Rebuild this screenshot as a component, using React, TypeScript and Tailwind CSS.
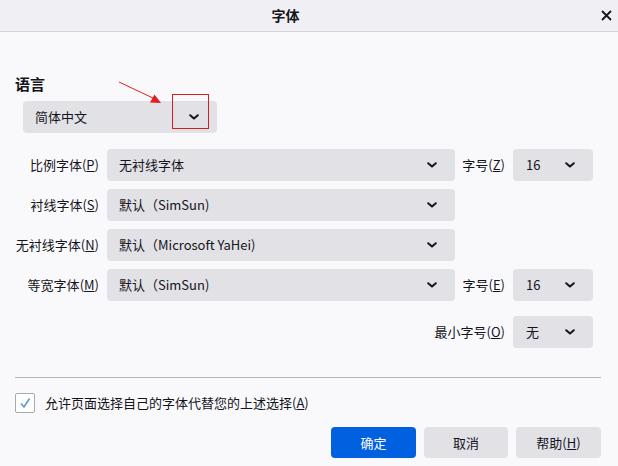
import React from 'react';

const font = { fontFamily: '"Noto Sans CJK SC", "Noto Sans", sans-serif' };

function Chevron() {
    return (
        <svg width="10" height="6" viewBox="0 0 10 6" className="shrink-0">
            <path d="M1.2 1.2 L5 4.6 L8.8 1.2" fill="none" stroke="#15141a" strokeWidth="2" strokeLinecap="round" strokeLinejoin="round" />
        </svg>
    );
}

function Select({ value, className }: { value: string; className: string }) {
    return (
        <div className={`h-8 rounded-[4px] bg-[#e1e1e6] flex items-center justify-between pl-3 pr-[18px] ${className}`}>
            <span className="text-[13px] text-[#15141a] whitespace-nowrap">{value}</span>
            <Chevron />
        </div>
    );
}

function Label({ text, k, className }: { text: string; k: string; className: string }) {
    return (
        <span className={`text-[13px] text-[#15141a] text-right whitespace-nowrap ${className}`}>
            {text}(<span className="underline">{k}</span>)
        </span>
    );
}

export default function App() {
    const rows = [
        { label: '比例字体', k: 'P', value: '无衬线字体', size: { label: '字号', k: 'Z', value: '16' } },
        { label: '衬线字体', k: 'S', value: '默认（SimSun)' },
        { label: '无衬线字体', k: 'N', value: '默认（Microsoft YaHei)' },
        { label: '等宽字体', k: 'M', value: '默认（SimSun)', size: { label: '字号', k: 'E', value: '16' } },
    ];

    return (
        <div className="relative w-[618px] h-[466px] bg-[#f9f9fb] flex flex-col overflow-hidden" style={font}>
            {/* title bar */}
            <div className="h-8 shrink-0 bg-[#f0f0f4] border-b border-[#d4d4d8] flex items-center">
                <span className="flex-1 text-center pr-[30px] text-[14px] font-bold text-[#15141a]">字体</span>
                <svg width="11" height="11" viewBox="0 0 11 11" className="mr-[6px]">
                    <path d="M1 1 L10 10 M10 1 L1 10" stroke="#15141a" strokeWidth="1.8" />
                </svg>
            </div>

            {/* language */}
            <div className="pl-[15px] mt-[41px] text-[15px] font-bold text-[#15141a] leading-[22px]">语言</div>
            <Select value="简体中文" className="ml-[23px] mt-[6px] w-[194px] pr-[16px]" />

            {/* fonts */}
            <div className="mt-4 flex flex-col gap-2">
                {rows.map((r) => (
                    <div key={r.label} className="flex items-center">
                        <Label text={r.label} k={r.k} className="w-[99px]" />
                        <Select value={r.value} className="ml-2 w-[348px]" />
                        {r.size && (
                            <>
                                <Label text={r.size.label} k={r.size.k} className="w-[50px]" />
                                <Select value={r.size.value} className="ml-2 w-20 pl-[13px]" />
                            </>
                        )}
                    </div>
                ))}
            </div>
            <div className="mt-[15px] flex items-center">
                <Label text="最小字号" k="O" className="w-[505px]" />
                <Select value="无" className="ml-2 w-20 pl-[13px]" />
            </div>

            {/* separator */}
            <div className="mx-[15px] mt-[29px] mr-[17px] border-t border-[#b6b6ba]" />

            {/* checkbox */}
            <div className="mt-[15px] ml-[15px] flex items-center gap-[10px]">
                <div className="w-5 h-5 bg-white border border-[#a9a9ae] rounded-[2px] flex items-center justify-center">
                    <svg width="12" height="12" viewBox="0 0 12 12">
                        <path d="M2 6.5 L5 10 L10.5 1.5" fill="none" stroke="#5b9ac9" strokeWidth="1.6" />
                    </svg>
                </div>
                <span className="text-[13px] text-[#15141a]">
                    允许页面选择自己的字体代替您的上述选择(<span className="underline">A</span>)
                </span>
            </div>

            {/* buttons */}
            <div className="mt-[14px] mr-[17px] flex justify-end gap-2">
                <button className="w-[85px] h-[31px] rounded-[4px] bg-[#0061e0] text-white text-[13px]">确定</button>
                <button className="w-[84px] h-[31px] rounded-[4px] bg-[#e1e1e6] text-[#15141a] text-[13px]">取消</button>
                <button className="w-[85px] h-[31px] rounded-[4px] bg-[#e1e1e6] text-[#15141a] text-[13px]">
                    帮助(<span className="underline">H</span>)
                </button>
            </div>

            {/* red annotation */}
            <div className="absolute left-[172px] top-[94px] w-[37px] h-[35px] border border-[#d02020]" />
            <svg className="absolute left-[115px] top-[78px]" width="50" height="30" viewBox="0 0 50 30">
                <path d="M4 4 L40 21" stroke="#e02020" strokeWidth="1" />
                <path d="M46 25 L35 24.5 L39.5 16.5 Z" fill="#e02020" />
            </svg>
        </div>
    );
}
